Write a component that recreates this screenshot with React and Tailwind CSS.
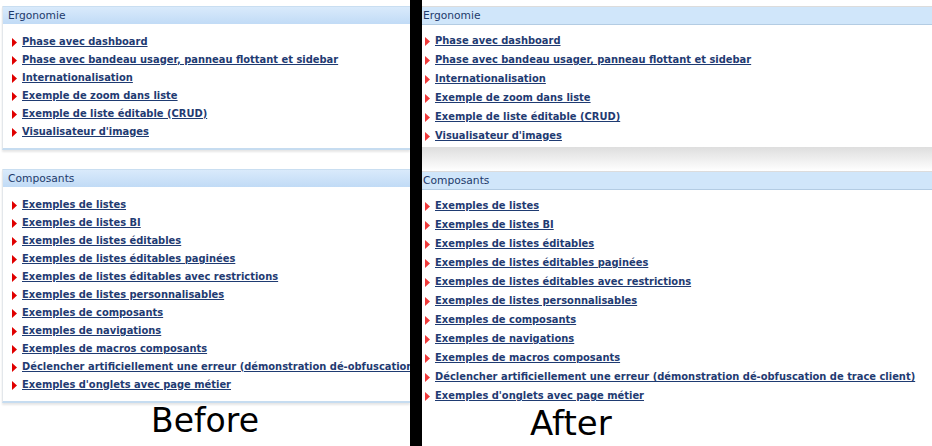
const ergonomie = [
  'Phase avec dashboard',
  'Phase avec bandeau usager, panneau flottant et sidebar',
  'Internationalisation',
  'Exemple de zoom dans liste',
  'Exemple de liste éditable (CRUD)',
  "Visualisateur d'images",
];

const composants = [
  'Exemples de listes',
  'Exemples de listes BI',
  'Exemples de listes éditables',
  'Exemples de listes éditables paginées',
  'Exemples de listes éditables avec restrictions',
  'Exemples de listes personnalisables',
  'Exemples de composants',
  'Exemples de navigations',
  'Exemples de macros composants',
  'Déclencher artificiellement une erreur (démonstration dé-obfuscation de trace client)',
  "Exemples d'onglets avec page métier",
];

function Bullet({ soft }) {
  return (
    <svg width="5" height="9" viewBox="0 0 5 9" className="shrink-0">
      <path d="M0 0 L5 4.5 L0 9 Z" fill={soft ? '#f03a3a' : '#e00000'} />
    </svg>
  );
}

function LinkList({ items, soft, rowClass }) {
  return (
    <ul>
      {items.map((label) => (
        <li key={label} className={`flex items-center gap-[5px] whitespace-nowrap ${rowClass}`}>
          <Bullet soft={soft} />
          <a href="#" className="font-['DejaVu_Sans',sans-serif] text-[9.92px] font-bold text-[#1f3b72] underline decoration-[#1f3b72]">
            {label}
          </a>
        </li>
      ))}
    </ul>
  );
}

function BeforePanel({ title, items, className = '' }) {
  return (
    <section className={`ml-[2px] border-b-2 border-l border-b-[#c6dcf0] border-l-[#e3e7eb] shadow-[0_2px_2px_rgba(0,0,0,0.1)] ${className}`}>
      <div className="h-[18px] border-t border-[#c9def1] bg-gradient-to-b from-[#d9eafb] to-[#c1dbf6] pl-[5px] font-['DejaVu_Sans',sans-serif] text-[10.7px] leading-[17px] text-[#1d3a6b]">
        {title}
      </div>
      <div className="pt-[9px] pb-[7px] pl-[9px]">
        <LinkList items={items} rowClass="h-[18px]" />
      </div>
    </section>
  );
}

function AfterPanel({ title, items }) {
  return (
    <section>
      <div className="h-[19px] border-t border-b border-t-[#dcdcdc] border-b-[#b3cce3] bg-[#d0e6fa] pl-px font-['DejaVu_Sans',sans-serif] text-[10.7px] leading-[17px] text-[#1d3a6b]">
        {title}
      </div>
      <div className="pt-[7px] pl-[3px]">
        <LinkList items={items} soft rowClass="h-[19px]" />
      </div>
    </section>
  );
}

export default function App() {
  return (
    <div className="flex h-[446px] w-[932px] overflow-hidden bg-white">
      <div className="flex w-[410px] shrink-0 flex-col overflow-hidden pt-[6px]">
        <BeforePanel title="Ergonomie" items={ergonomie} />
        <BeforePanel title="Composants" items={composants} className="mt-[19px]" />
        <div className="mt-px text-center font-['DejaVu_Sans',sans-serif] text-[33px] leading-none text-black">Before</div>
      </div>

      <div className="w-[12px] shrink-0 bg-black" />

      <div className="flex min-w-0 flex-1 flex-col overflow-hidden pt-[6px]">
        <AfterPanel title="Ergonomie" items={ergonomie} />
        <div className="mt-px h-[24px] bg-gradient-to-b from-[#dedede] to-white" />
        <AfterPanel title="Composants" items={composants} />
        <div className="ml-[108px] font-['DejaVu_Sans',sans-serif] text-[34px] leading-none text-black">After</div>
      </div>
    </div>
  );
}
